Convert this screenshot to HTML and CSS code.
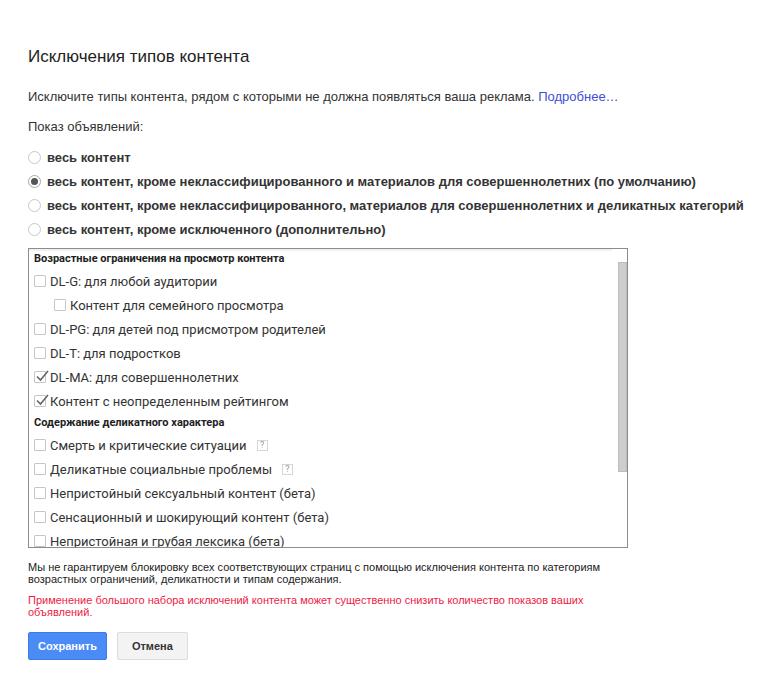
FILE: index.html
```html
<!DOCTYPE html>
<html lang="ru">
<head>
    <meta charset="UTF-8">
    <title>Исключения типов контента</title>
    <link rel="stylesheet" href="styles.css">
</head>
<body>
<div class="page">
    <h1>Исключения типов контента</h1>

    <p class="intro">Исключите типы контента, рядом с которыми не должна появляться ваша реклама. <a href="#">Подробнее…</a></p>

    <p class="label">Показ объявлений:</p>

    <div class="radios">
        <div class="radio"><span class="dot"></span>весь контент</div>
        <div class="radio on"><span class="dot"></span>весь контент, кроме неклассифицированного и материалов для совершеннолетних (по умолчанию)</div>
        <div class="radio"><span class="dot"></span>весь контент, кроме неклассифицированного, материалов для совершеннолетних и деликатных категорий</div>
        <div class="radio"><span class="dot"></span>весь контент, кроме исключенного (дополнительно)</div>
    </div>

    <div class="list-box">
        <div class="list">
            <div class="group">Возрастные ограничения на просмотр контента</div>
            <div class="item"><span class="box"></span>DL-G: для любой аудитории</div>
            <div class="item sub"><span class="box"></span>Контент для семейного просмотра</div>
            <div class="item"><span class="box"></span>DL-PG: для детей под присмотром родителей</div>
            <div class="item"><span class="box"></span>DL-T: для подростков</div>
            <div class="item"><span class="box checked"><svg viewBox="0 0 14 14" width="14" height="14"><path d="M2 7.5 L5.5 11 L13 2" fill="none" stroke="#666" stroke-width="1.6"/></svg></span>DL-MA: для совершеннолетних</div>
            <div class="item"><span class="box checked"><svg viewBox="0 0 14 14" width="14" height="14"><path d="M2 7.5 L5.5 11 L13 2" fill="none" stroke="#666" stroke-width="1.6"/></svg></span>Контент с неопределенным рейтингом</div>
            <div class="group">Содержание деликатного характера</div>
            <div class="item"><span class="box"></span>Смерть и критические ситуации<span class="help">?</span></div>
            <div class="item"><span class="box"></span>Деликатные социальные проблемы<span class="help">?</span></div>
            <div class="item"><span class="box"></span>Непристойный сексуальный контент (бета)</div>
            <div class="item"><span class="box"></span>Сенсационный и шокирующий контент (бета)</div>
            <div class="item"><span class="box"></span>Непристойная и грубая лексика (бета)</div>
            <div class="item"><span class="box"></span>Трагедии и конфликты (бета)</div>
        </div>
        <div class="thumb"></div>
    </div>

    <p class="note">Мы не гарантируем блокировку всех соответствующих страниц с помощью исключения контента по категориям возрастных ограничений, деликатности и типам содержания.</p>

    <p class="warn">Применение большого набора исключений контента может существенно снизить количество показов ваших объявлений.</p>

    <div class="buttons">
        <button class="btn primary">Сохранить</button>
        <button class="btn">Отмена</button>
    </div>
</div>
</body>
</html>
```

FILE: styles.css
```css
body {
    margin: 0;
    background: #fff;
    color: #222;
    font-family: "Liberation Sans", Arial, sans-serif;
}

.page {
    padding: 47px 0 0 28px;
}

h1 {
    margin: 0;
    font-size: 17px;
    font-weight: normal;
    line-height: 20px;
    color: #222;
}

.intro {
    margin: 22px 0 0;
    font-size: 13px;
    line-height: 16px;
    color: #333;
}

.intro a {
    color: #4050d6;
    text-decoration: none;
}

.label {
    margin: 14px 0 0;
    font-size: 13px;
    line-height: 16px;
    color: #333;
}

.radios {
    margin-top: 10px;
}

.radio {
    display: flex;
    align-items: center;
    height: 24px;
    font-size: 13px;
    font-weight: bold;
    color: #333;
}

.radio .dot {
    width: 13px;
    height: 13px;
    box-sizing: border-box;
    border: 1px solid #c8c8c8;
    border-radius: 50%;
    margin-right: 6px;
    display: flex;
    align-items: center;
    justify-content: center;
}

.radio.on .dot {
    border-color: #a8a8a8;
}

.radio.on .dot::after {
    content: "";
    width: 7px;
    height: 7px;
    border-radius: 50%;
    background: #555;
}

.list-box {
    position: relative;
    width: 600px;
    height: 300px;
    box-sizing: border-box;
    margin-top: 7px;
    border: 1px solid #8c8c8c;
    overflow: hidden;
    font-family: Roboto, "Liberation Sans", sans-serif;
}

.list {
    margin-right: 15px;
    box-shadow: inset 0 2px #f1f1f1;
}

.group {
    height: 20px;
    line-height: 20px;
    padding-left: 5px;
    font-size: 11px;
    font-weight: bold;
    color: #222;
}

.item {
    display: flex;
    align-items: center;
    height: 24px;
    padding-left: 5px;
    font-size: 13px;
    color: #333;
}

.item.sub {
    padding-left: 25px;
}

.box {
    position: relative;
    width: 12px;
    height: 12px;
    box-sizing: border-box;
    border: 1px solid #c6c6c6;
    border-radius: 1px;
    margin-right: 4px;
    background: #fff;
}

.box svg {
    position: absolute;
    left: 0;
    top: -3px;
}

.help {
    width: 11px;
    height: 11px;
    box-sizing: border-box;
    margin-left: 10px;
    border: 1px solid #d6d6d6;
    font-size: 9px;
    line-height: 9px;
    text-align: center;
    color: #999;
}

.thumb {
    position: absolute;
    top: 13px;
    right: 0;
    width: 9px;
    height: 210px;
    box-sizing: border-box;
    background: #cdcdcd;
    border: 1px solid #bdbdbd;
}

.note {
    margin: 13px 0 0;
    width: 590px;
    font-size: 11px;
    line-height: 12px;
    color: #222;
}

.warn {
    margin: 9px 0 0;
    width: 590px;
    font-size: 11px;
    line-height: 12px;
    color: #ee1a45;
}

.buttons {
    display: flex;
    gap: 10px;
    margin-top: 14px;
}

.btn {
    height: 28px;
    padding: 0 14px;
    border: 1px solid #dcdcdc;
    border-radius: 2px;
    background: #f3f3f3;
    color: #333;
    font-family: "Liberation Sans", Arial, sans-serif;
    font-size: 11px;
    font-weight: bold;
}

.btn.primary {
    padding: 0 9px;
    background: #4a8bf5;
    border-color: #3d7ce8;
    color: #fff;
}
```
